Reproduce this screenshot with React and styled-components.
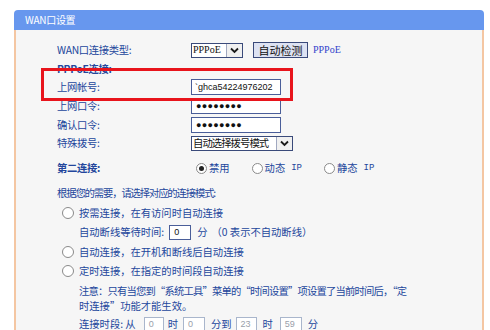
import React from 'react';
import styled, { createGlobalStyle } from 'styled-components';

const GlobalStyle = createGlobalStyle`
  body {
    margin: 0;
    background: #ffffff;
    font-family: "Noto Sans CJK SC", "Liberation Sans", sans-serif;
  }
`;

const Page = styled.div`
  position: relative;
  width: 490px;
  height: 330px;
  overflow: hidden;
  padding: 10px 0 0 14px;
  box-sizing: border-box;
`;

const Panel = styled.div`
  width: 470px;
`;

const Header = styled.div`
  height: 20px;
  line-height: 20px;
  background: #6797ee;
  border-radius: 4px 4px 0 0;
  color: #ffffff;
  font-size: 10px;
  padding-left: 11px;
  letter-spacing: -0.3px;
`;

const Body = styled.div`
  background: #f6f6f6;
  border-left: 2px solid #f4c6a2;
  border-right: 2px solid #f4c6a2;
  padding: 11px 0 20px 41px;
  color: #23469c;
  font-size: 10.3px;
  line-height: 1.2;
`;

const FormRow = styled.div`
  display: grid;
  grid-template-columns: 134px auto;
  align-items: center;
  height: ${p => p.$h || 18.6}px;
  margin-top: ${p => p.$mt || 0}px;
`;

const Label = styled.div`
  font-weight: ${p => (p.$bold ? 700 : 400)};
  white-space: nowrap;
  letter-spacing: -0.3px;
`;

const Controls = styled.div`
  display: flex;
  align-items: center;
`;

const Select = styled.div`
  display: flex;
  align-items: center;
  justify-content: space-between;
  width: ${p => p.$w}px;
  height: 15px;
  border: 1px solid #3a4a7a;
  background: #ffffff;
  box-sizing: border-box;
  font-size: ${p => p.$fs || 10}px;
  color: #111;
  font-family: ${p => (p.$latin ? '"Liberation Serif", serif' : '"Noto Sans CJK SC", sans-serif')};
`;

const SelectText = styled.span`
  padding-left: 1px;
  white-space: nowrap;
  letter-spacing: ${p => p.$ls || 0}px;
`;

const Arrow = styled.span`
  width: 15px;
  height: 13px;
  flex: none;
  border-left: 1px solid #a0a8c0;
  background: #f0f0f0;
  display: flex;
  align-items: center;
  justify-content: center;
`;

const Button = styled.div`
  margin-left: 10px;
  width: 55px;
  height: 16px;
  box-sizing: border-box;
  border: 1px solid #3a4a7a;
  background: #dde2f2;
  color: #111;
  font-size: 11px;
  line-height: 14px;
  text-align: center;
`;

const Hint = styled.span`
  margin-left: 5px;
  font-size: 10px;
  color: #3344cc;
  font-family: "Liberation Serif", serif;
`;

const TextBox = styled.div`
  width: ${p => p.$w || 90}px;
  height: ${p => p.$h || 16}px;
  box-sizing: border-box;
  border: 1px solid ${p => (p.$dim ? '#a9b6cc' : '#4a5e99')};
  background: #ffffff;
  color: ${p => (p.$dim ? '#9aa0aa' : '#111')};
  font-size: ${p => p.$fs || 9}px;
  line-height: ${p => (p.$h || 16) - 2}px;
  padding-left: ${p => p.$pl || 4}px;
  font-family: "Liberation Sans", sans-serif;
  white-space: nowrap;
  overflow: hidden;
  letter-spacing: ${p => p.$ls || 0}px;
`;

const RadioGroup = styled.label`
  display: flex;
  align-items: center;
  gap: 2px;
  margin-left: ${p => p.$ml || 0}px;
  white-space: nowrap;
`;

const RadioDot = styled.span`
  width: 11px;
  height: 11px;
  box-sizing: border-box;
  border: 1px solid #8a8a8a;
  border-radius: 50%;
  background: #ffffff;
  display: flex;
  align-items: center;
  justify-content: center;
  &::after {
    content: '';
    width: 5px;
    height: 5px;
    border-radius: 50%;
    background: ${p => (p.$on ? '#222' : 'transparent')};
  }
`;

const Ip = styled.span`
  font-family: "Liberation Mono", monospace;
  font-size: 9px;
  margin-left: 4px;
`;

const Line = styled.div`
  display: flex;
  align-items: center;
  height: ${p => p.$h || 19.5}px;
  padding-left: ${p => p.$pl || 0}px;
  margin-top: ${p => p.$mt || 0}px;
  white-space: nowrap;
  letter-spacing: ${p => p.$ls || 0}px;
`;

const ModeRadio = styled.span`
  width: 12px;
  height: 12px;
  box-sizing: border-box;
  border: 1px solid #8a8a8a;
  border-radius: 50%;
  background: #ffffff;
  margin: 0 5px 0 5px;
`;

const Unit = styled.span`
  margin: 0 ${p => p.$mr ?? 5}px 0 ${p => p.$ml ?? 5}px;
`;

const Highlight = styled.div`
  position: absolute;
  left: 41px;
  top: 68px;
  width: 252px;
  height: 33px;
  box-sizing: border-box;
  border: 3px solid #e8141c;
  pointer-events: none;
`;

const ArrowIcon = () => (
  <svg width="9" height="7" viewBox="0 0 9 7">
    <path d="M1 1.5 L4.5 5 L8 1.5" fill="none" stroke="#1a1a1a" strokeWidth="1.8" />
  </svg>
);

export default function App() {
  return (
    <Page>
      <GlobalStyle />
      <Panel>
        <Header>WAN口设置</Header>
        <Body>
          <FormRow>
            <Label>WAN口连接类型:</Label>
            <Controls>
              <Select $w={52} $latin>
                <SelectText>PPPoE</SelectText>
                <Arrow><ArrowIcon /></Arrow>
              </Select>
              <Button>自动检测</Button>
              <Hint>PPPoE</Hint>
            </Controls>
          </FormRow>
          <FormRow>
            <Label $bold>PPPoE连接:</Label>
          </FormRow>
          <FormRow>
            <Label>上网帐号:</Label>
            <Controls>
              <TextBox $pl={3}>`ghca54224976202</TextBox>
            </Controls>
          </FormRow>
          <FormRow>
            <Label>上网口令:</Label>
            <Controls>
              <TextBox $ls={0.3}>●●●●●●●●</TextBox>
            </Controls>
          </FormRow>
          <FormRow>
            <Label>确认口令:</Label>
            <Controls>
              <TextBox $ls={0.3}>●●●●●●●●</TextBox>
            </Controls>
          </FormRow>
          <FormRow>
            <Label>特殊拨号:</Label>
            <Controls>
              <Select $w={102} $fs={10.3}>
                <SelectText $ls={-0.9}>自动选择拨号模式</SelectText>
                <Arrow><ArrowIcon /></Arrow>
              </Select>
            </Controls>
          </FormRow>
          <FormRow $h={19} $mt={6}>
            <Label $bold>第二连接:</Label>
            <Controls>
              <RadioGroup $ml={5}>
                <RadioDot $on />禁用
              </RadioGroup>
              <RadioGroup $ml={22}>
                <RadioDot />动态<Ip>IP</Ip>
              </RadioGroup>
              <RadioGroup $ml={22}>
                <RadioDot />静态<Ip>IP</Ip>
              </RadioGroup>
            </Controls>
          </FormRow>
          <Line $mt={6} $ls={-1.1}>根据您的需要，请选择对应的连接模式:</Line>
          <Line>
            <ModeRadio />按需连接，在有访问时自动连接
          </Line>
          <Line $pl={22}>
            自动断线等待时间:
            <Unit $ml={5} $mr={0} />
            <TextBox $w={22} $h={15}>0</TextBox>
            <Unit $ml={6} $mr={4}>分</Unit>
            （0 表示不自动断线）
          </Line>
          <Line>
            <ModeRadio />自动连接，在开机和断线后自动连接
          </Line>
          <Line>
            <ModeRadio />定时连接，在指定的时间段自动连接
          </Line>
          <Line $pl={22} $h={15} $mt={3} $ls={-0.8}>
            注意：只有当您到“系统工具”菜单的“时间设置”项设置了当前时间后，“定
          </Line>
          <Line $pl={22} $h={15}>
            时连接”功能才能生效。
          </Line>
          <Line $pl={22} $h={20}>
            连接时段: 从
            <Unit $ml={8} $mr={0} />
            <TextBox $w={20} $h={15} $dim>0</TextBox>
            <Unit $ml={4} $mr={5}>时</Unit>
            <TextBox $w={22} $h={15} $dim>0</TextBox>
            <Unit $ml={6} $mr={4}>分到</Unit>
            <TextBox $w={21} $h={15} $dim>23</TextBox>
            <Unit $ml={6} $mr={7}>时</Unit>
            <TextBox $w={22} $h={15} $dim>59</TextBox>
            <Unit $ml={6} $mr={0}>分</Unit>
          </Line>
        </Body>
      </Panel>
      <Highlight />
    </Page>
  );
}
